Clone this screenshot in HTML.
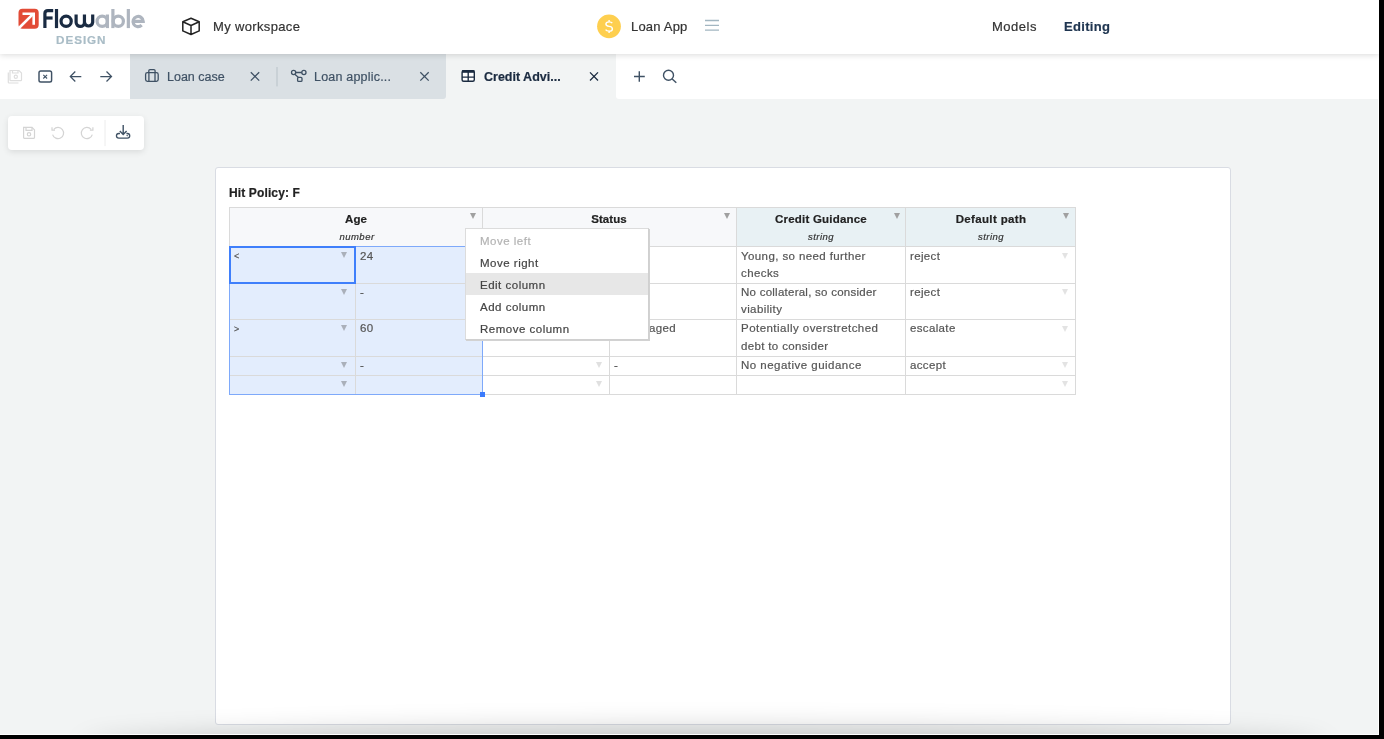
<!DOCTYPE html>
<html><head><meta charset="utf-8">
<style>
*{box-sizing:border-box;margin:0;padding:0}
html,body{width:1384px;height:739px;overflow:hidden;background:#000}
body{font-family:"Liberation Sans",sans-serif;position:relative;-webkit-font-smoothing:antialiased}
.abs{position:absolute}
.t{position:absolute;white-space:nowrap;line-height:1;will-change:transform;-webkit-text-stroke:0.2px currentColor}
#app{position:absolute;left:0;top:0;width:1379px;height:735px;background:#f2f4f4;overflow:hidden}
#edge-r{position:absolute;left:1378px;top:0;width:1px;height:735px;background:#fff}
#edge-b{position:absolute;left:0;top:734px;width:1379px;height:1px;background:#fff}
#hdr{position:absolute;left:0;top:0;width:1379px;height:54px;background:#fff;z-index:5;box-shadow:0 1px 6px rgba(0,0,0,.15)}
#tabbar{position:absolute;left:0;top:54px;width:1379px;height:45px;background:#f2f4f4}
#toolbar{position:absolute;left:8px;top:116px;width:136px;height:34px;background:#fff;border-radius:4px;box-shadow:0 2px 6px rgba(0,0,0,.10)}
#panel{position:absolute;left:215px;top:167px;width:1016px;height:558px;background:#fff;border:1px solid #d9dce3;border-radius:3px}
#bshadow{position:absolute;left:92px;top:740px;width:1225px;height:20px;border-radius:50%;box-shadow:0 0 28px 10px rgba(0,0,0,.22)}
</style></head>
<body>
<div id="app">
  <div id="tabbar">
    <div class="abs" style="left:0;top:0;width:130px;height:45px;background:#fff"></div>
    <svg class="abs" style="left:0;top:0" width="130" height="45" viewBox="0 54 130 45">
      <g fill="none" stroke="#dedede" stroke-width="1.2">
        <path d="M10 70.5 H19 L21.5 73 V80 Q21.5 80.7 20.8 80.7 H10.7 Q10 80.7 10 80 Z"/>
        <path d="M12.5 70.5 V73 H18 V70.5"/>
        <circle cx="15.8" cy="76.8" r="1.6"/>
        <path d="M8.3 72.5 V82.3 Q8.3 83 9 83 H18.5"/>
      </g>
      <rect x="39" y="71" width="12.6" height="11" rx="1.8" fill="none" stroke="#3f5164" stroke-width="1.45"/>
      <path d="M43.3 74.9 L47.1 78.5 M47.1 74.9 L43.3 78.5" stroke="#3f5164" stroke-width="1.05"/>
      <path d="M81.3 76.5 H70.3 M75.3 71.5 L70.3 76.5 L75.3 81.5" fill="none" stroke="#3f5164" stroke-width="1.25"/>
      <path d="M100.3 76.5 H111.5 M106.5 71.5 L111.5 76.5 L106.5 81.5" fill="none" stroke="#3f5164" stroke-width="1.25"/>
    </svg>
    <div class="abs" style="left:130px;top:0;width:316px;height:45px;background:#dae0e4;border-bottom-right-radius:3px"></div>
    <div class="abs" style="left:446px;top:0;width:170px;height:45px;background:#f2f4f4"></div>
    <div class="abs" style="left:616px;top:0;width:763px;height:45px;background:#fff;border-bottom-left-radius:3px"></div>
    <svg class="abs" style="left:130px;top:0" width="550" height="45" viewBox="130 54 550 45">
      <g fill="none" stroke="#3f5164" stroke-width="1.3">
        <rect x="145.6" y="72.6" width="12.6" height="8.8" rx="1.8"/>
        <path d="M148.8 72.6 V70.8 Q148.8 69.6 150 69.6 H153.9 Q155.1 69.6 155.1 70.8 V72.6"/>
        <path d="M148.9 72.6 V81.4 M155 72.6 V81.4"/>
        <path d="M250.8 72.2 L259.2 80.6 M259.2 72.2 L250.8 80.6"/>
        <circle cx="293.6" cy="72.5" r="2.1"/>
        <circle cx="303.9" cy="72.5" r="2.1"/>
        <rect x="297.6" y="77.4" width="4.4" height="4" rx="1"/>
        <path d="M295.7 72.5 H301.8 M294.8 74.3 L298.5 77.4"/>
        <path d="M420.3 72.2 L428.7 80.6 M428.7 72.2 L420.3 80.6"/>
      </g>
      <path d="M277 67 V86.4" stroke="#b8c2c8" stroke-width="1"/>
      <g fill="none" stroke="#1b2b40">
        <rect x="462.1" y="70.7" width="12.2" height="10.6" rx="1.5" stroke-width="1.4" fill="#fff"/>
        <path d="M462 71.5 H474.4" stroke-width="2.6"/>
        <path d="M462 77.1 H474.4 M468.2 72 V81.3" stroke-width="1.35"/>
        <path d="M590 72.4 L598 80.5 M598 72.4 L590 80.5" stroke-width="1.3"/>
      </g>
      <g fill="none" stroke="#3f5164" stroke-width="1.4">
        <path d="M639.3 71.2 V81.7 M634 76.5 H644.8"/>
        <circle cx="668.5" cy="75.2" r="5"/>
        <path d="M672.2 78.9 L676.3 82.8"/>
      </g>
    </svg>
    <div class="t" style="left:167px;top:17px;font-size:12.5px;color:#3f5164">Loan case</div>
    <div class="t" style="left:314px;top:17px;font-size:12.5px;letter-spacing:0.2px;color:#3f5164">Loan applic...</div>
    <div class="t" style="left:484px;top:17px;font-size:12.5px;font-weight:700;color:#1b2b40">Credit Advi...</div>
  </div>
  <div id="hdr">
    <svg class="abs" style="left:0;top:0" width="160" height="53" viewBox="0 0 160 53">
      <rect x="18.5" y="8.8" width="20.2" height="19.9" rx="4" fill="#e24b36"/>
      <path d="M17.5 29.5 L33.2 13.8" stroke="#fff" stroke-width="2.6" fill="none"/>
      <path d="M22.5 13.7 H33.7 V24.7" stroke="#fff" stroke-width="2.6" fill="none" stroke-linejoin="miter"/>
      <g fill="none" stroke="#1a2b42" stroke-width="3.2">
        <path d="M44.9 28.1 V13.6 Q44.9 10.6 47.9 10.6 H53.2"/>
        <path d="M44.9 18 H52.6"/>
        <path d="M56.5 9 V28.1"/>
        <circle cx="66.15" cy="21.3" r="5.1"/>
        <path d="M76.1 14.5 V22.3 A4.15 4.15 0 0 0 84.45 22.3 V14.5 M84.45 22.3 A4.15 4.15 0 0 0 92.7 22.3 V14.5"/>
      </g>
      <g fill="none" stroke="#aeb5bf" stroke-width="3.2">
        <circle cx="102.2" cy="21.3" r="5.1"/>
        <path d="M107.4 14.5 V28.1"/>
        <path d="M112.9 9 V28.1"/>
        <circle cx="118.3" cy="21.3" r="5.1"/>
        <path d="M128.35 9 V28.1"/>
        <path d="M132.6 21.3 H143.2 A5.1 5.1 0 1 0 141.7 25.2"/>
      </g>
    </svg>
    <div class="t" style="left:55.7px;top:33.5px;font-size:11.7px;font-weight:700;letter-spacing:0.95px;color:#a9bcc6">DESIGN</div>
    <svg class="abs" style="left:180px;top:16px" width="22" height="22" viewBox="0 0 22 22">
      <path d="M11 2.3 L19.2 5.8 V14.9 L11 18.5 L2.8 14.9 V5.8 Z M2.8 5.8 L11 9.5 L19.2 5.8 M11 9.5 V18.5" fill="none" stroke="#222" stroke-width="1.5" stroke-linejoin="round"/>
    </svg>
    <div class="t" style="left:213px;top:20px;font-size:13px;letter-spacing:0.35px;color:#333">My workspace</div>
    <svg class="abs" style="left:596px;top:13px" width="26" height="27" viewBox="596 13 26 27">
      <circle cx="609" cy="26.3" r="11.9" fill="#fecf4f"/>
      <path d="M612.3 23.2 Q611.4 21.9 609.1 21.9 Q605.9 21.9 605.9 24.1 Q605.9 26.1 609.1 26.4 Q612.4 26.7 612.4 28.9 Q612.4 31.1 609.1 31.1 Q606.6 31.1 605.6 29.6 M609.1 20.1 V21.9 M609.1 31.1 V32.9" fill="none" stroke="#fff" stroke-width="1.4"/>
    </svg>
    <div class="t" style="left:631px;top:20px;font-size:13px;letter-spacing:0.2px;color:#333">Loan App</div>
    <svg class="abs" style="left:704px;top:18px" width="16" height="14" viewBox="0 0 16 14">
      <path d="M1 2.5 H15 M1 7.4 H15 M1 12.1 H15" stroke="#a2b6c1" stroke-width="1.3"/>
    </svg>
    <div class="t" style="left:992px;top:20px;font-size:13px;letter-spacing:0.5px;color:#333">Models</div>
    <div class="t" style="left:1064px;top:20px;font-size:13px;letter-spacing:0.32px;font-weight:700;color:#1f3550">Editing</div>
  </div>
  <div id="toolbar">
    <svg class="abs" style="left:-8px;top:-116px" width="150" height="160" viewBox="0 0 150 160">
      <g fill="none" stroke="#d4d4d4" stroke-width="1.2">
        <path d="M23.6 127.4 H32 L34.5 129.9 V137.6 Q34.5 138.3 33.8 138.3 H24.3 Q23.6 138.3 23.6 137.6 Z"/>
        <path d="M26 127.4 V130.3 H32 V127.4"/>
        <circle cx="29" cy="134.3" r="1.7"/>
        <path d="M53.8 129.3 A5.6 5.6 0 1 1 52.6 134.6"/>
        <path d="M52 127.2 V130.2 H55"/>
        <path d="M91.1 129.3 A5.6 5.6 0 1 0 92.3 134.6"/>
        <path d="M92.9 127.2 V130.2 H89.9"/>
      </g>
      <path d="M105 120 V146.2" stroke="#ececec" stroke-width="1"/>
      <g fill="none" stroke="#3f5164" stroke-width="1.4">
        <path d="M123.2 125 V134.4 M119.8 131 L123.2 134.4 L126.6 131"/>
        <path d="M120 133.5 H118.8 A2.35 2.35 0 0 0 118.8 138.2 H127.4 A2.35 2.35 0 0 0 127.4 133.5 H126.4" stroke-width="1.3"/>
        <circle cx="127.2" cy="135.6" r="0.4" stroke-width="0.9"/>
      </g>
    </svg>
  </div>
  <div id="panel"></div>
  <div class="t" style="left:229px;top:186.6px;font-size:12px;font-weight:700;letter-spacing:0.13px;color:#222">Hit Policy: F</div>
<!--TABLE-->
<div class="abs" style="left:229px;top:207px;width:507px;height:40px;background:#f7f8fa;"></div>
<div class="abs" style="left:736px;top:207px;width:339px;height:40px;background:#e8f1f4;"></div>
<div class="abs" style="left:229px;top:246px;width:254px;height:149px;background:#e3edfd;"></div>
<div class="abs" style="left:229px;top:207px;width:1px;height:188px;background:#dadada;"></div>
<div class="abs" style="left:355px;top:207px;width:1px;height:188px;background:#dadada;"></div>
<div class="abs" style="left:482px;top:207px;width:1px;height:188px;background:#dadada;"></div>
<div class="abs" style="left:609px;top:207px;width:1px;height:188px;background:#dadada;"></div>
<div class="abs" style="left:736px;top:207px;width:1px;height:188px;background:#dadada;"></div>
<div class="abs" style="left:905px;top:207px;width:1px;height:188px;background:#dadada;"></div>
<div class="abs" style="left:1075px;top:207px;width:1px;height:188px;background:#dadada;"></div>
<div class="abs" style="left:229px;top:207px;width:847px;height:1px;background:#dadada;"></div>
<div class="abs" style="left:229px;top:246px;width:847px;height:1px;background:#dadada;"></div>
<div class="abs" style="left:229px;top:283px;width:847px;height:1px;background:#dadada;"></div>
<div class="abs" style="left:229px;top:319px;width:847px;height:1px;background:#dadada;"></div>
<div class="abs" style="left:229px;top:356px;width:847px;height:1px;background:#dadada;"></div>
<div class="abs" style="left:229px;top:375px;width:847px;height:1px;background:#dadada;"></div>
<div class="abs" style="left:229px;top:394px;width:847px;height:1px;background:#dadada;"></div>
<div class="abs" style="left:230px;top:208px;width:252px;height:38px;background:#f7f8fa;"></div>
<div class="abs" style="left:483px;top:208px;width:253px;height:38px;background:#f7f8fa;"></div>
<div class="abs" style="left:229px;top:246px;width:847px;height:1px;background:#dadada;"></div>
<div class="abs" style="left:229px;top:246px;width:254px;height:1px;background:#7ea9fa;"></div>
<div class="abs" style="left:229px;top:246px;width:1px;height:149px;background:#7ea9fa;"></div>
<div class="abs" style="left:482px;top:246px;width:1px;height:149px;background:#7ea9fa;"></div>
<div class="abs" style="left:229px;top:394px;width:254px;height:1px;background:#7ea9fa;"></div>
<div class="abs" style="left:229px;top:246px;width:127px;height:38px;border:2px solid #3f7ffb"></div>
<div class="abs" style="left:480px;top:392px;width:5px;height:5px;background:#3b7bfc;"></div>
<div class="t" style="left:256px;top:214px;width:200px;text-align:center;font-size:11.5px;letter-spacing:0.1px;color:#222;font-weight:700;font-style:normal">Age</div>
<div class="t" style="left:256.5px;top:232.3px;width:200px;text-align:center;font-size:9.5px;letter-spacing:0.5px;color:#333;font-weight:400;font-style:italic">number</div>
<div class="t" style="left:509px;top:214px;width:200px;text-align:center;font-size:11.5px;letter-spacing:0.1px;color:#222;font-weight:700;font-style:normal">Status</div>
<div class="t" style="left:721px;top:214px;width:200px;text-align:center;font-size:11.5px;letter-spacing:0.2px;color:#222;font-weight:700;font-style:normal">Credit Guidance</div>
<div class="t" style="left:721px;top:232.3px;width:200px;text-align:center;font-size:9.5px;letter-spacing:0.5px;color:#333;font-weight:400;font-style:italic">string</div>
<div class="t" style="left:890.5px;top:214px;width:200px;text-align:center;font-size:11.5px;letter-spacing:0.35px;color:#222;font-weight:700;font-style:normal">Default path</div>
<div class="t" style="left:890.5px;top:232.3px;width:200px;text-align:center;font-size:9.5px;letter-spacing:0.5px;color:#333;font-weight:400;font-style:italic">string</div>
<div class="abs" style="left:469.90000000000003px;top:213px;width:0;height:0;border-left:3.4px solid transparent;border-right:3.4px solid transparent;border-top:6px solid #a0a0a0"></div>
<div class="abs" style="left:724.1px;top:213px;width:0;height:0;border-left:3.4px solid transparent;border-right:3.4px solid transparent;border-top:6px solid #a0a0a0"></div>
<div class="abs" style="left:893.6px;top:213px;width:0;height:0;border-left:3.4px solid transparent;border-right:3.4px solid transparent;border-top:6px solid #a0a0a0"></div>
<div class="abs" style="left:1062.6px;top:213px;width:0;height:0;border-left:3.4px solid transparent;border-right:3.4px solid transparent;border-top:6px solid #a0a0a0"></div>
<div class="t" style="left:233.5px;top:252.3px;font-size:9px;letter-spacing:0px;color:#555;font-weight:400;font-style:normal;">&lt;</div>
<div class="t" style="left:233.5px;top:324.8px;font-size:9px;letter-spacing:0px;color:#555;font-weight:400;font-style:normal;">&gt;</div>
<div class="t" style="left:359.5px;top:250.8px;font-size:11.5px;letter-spacing:0.3px;color:#555;font-weight:400;font-style:normal;">24</div>
<div class="t" style="left:359.5px;top:287.0px;font-size:11.5px;letter-spacing:0.3px;color:#555;font-weight:400;font-style:normal;">-</div>
<div class="t" style="left:359.5px;top:323.3px;font-size:11.5px;letter-spacing:0.3px;color:#555;font-weight:400;font-style:normal;">60</div>
<div class="t" style="left:359.5px;top:359.8px;font-size:11.5px;letter-spacing:0.3px;color:#555;font-weight:400;font-style:normal;">-</div>
<div class="t" style="left:614px;top:359.8px;font-size:11.5px;letter-spacing:0.3px;color:#555;font-weight:400;font-style:normal;">-</div>
<div class="t" style="left:611px;top:323.3px;font-size:11.5px;letter-spacing:0.35px;color:#555;font-weight:400;font-style:normal;">Disengaged</div>
<div class="t" style="left:741px;top:250.8px;font-size:11.5px;letter-spacing:0.4px;color:#555;font-weight:400;font-style:normal;">Young, so need further</div>
<div class="t" style="left:741px;top:268.2px;font-size:11.5px;letter-spacing:0.4px;color:#555;font-weight:400;font-style:normal;">checks</div>
<div class="t" style="left:741px;top:287.0px;font-size:11.5px;letter-spacing:0.25px;color:#555;font-weight:400;font-style:normal;">No collateral, so consider</div>
<div class="t" style="left:741px;top:304.4px;font-size:11.5px;letter-spacing:0.4px;color:#555;font-weight:400;font-style:normal;">viability</div>
<div class="t" style="left:741px;top:323.3px;font-size:11.5px;letter-spacing:0.46px;color:#555;font-weight:400;font-style:normal;">Potentially overstretched</div>
<div class="t" style="left:741px;top:340.7px;font-size:11.5px;letter-spacing:0.35px;color:#555;font-weight:400;font-style:normal;">debt to consider</div>
<div class="t" style="left:741px;top:359.8px;font-size:11.5px;letter-spacing:0.48px;color:#555;font-weight:400;font-style:normal;">No negative guidance</div>
<div class="t" style="left:910px;top:250.8px;font-size:11.5px;letter-spacing:0.35px;color:#555;font-weight:400;font-style:normal;">reject</div>
<div class="t" style="left:910px;top:287.0px;font-size:11.5px;letter-spacing:0.35px;color:#555;font-weight:400;font-style:normal;">reject</div>
<div class="t" style="left:910px;top:323.3px;font-size:11.5px;letter-spacing:0.35px;color:#555;font-weight:400;font-style:normal;">escalate</div>
<div class="t" style="left:910px;top:359.8px;font-size:11.5px;letter-spacing:0.35px;color:#555;font-weight:400;font-style:normal;">accept</div>
<div class="abs" style="left:341.25px;top:252.2px;width:0;height:0;border-left:3.75px solid transparent;border-right:3.75px solid transparent;border-top:6.8px solid #aab0ba"></div>
<div class="abs" style="left:595.5px;top:252.5px;width:0;height:0;border-left:3.5px solid transparent;border-right:3.5px solid transparent;border-top:6px solid #e0e0e0"></div>
<div class="abs" style="left:1061.5px;top:252.5px;width:0;height:0;border-left:3.5px solid transparent;border-right:3.5px solid transparent;border-top:6px solid #e3e3e3"></div>
<div class="abs" style="left:341.25px;top:288.7px;width:0;height:0;border-left:3.75px solid transparent;border-right:3.75px solid transparent;border-top:6.8px solid #aab0ba"></div>
<div class="abs" style="left:595.5px;top:289px;width:0;height:0;border-left:3.5px solid transparent;border-right:3.5px solid transparent;border-top:6px solid #e0e0e0"></div>
<div class="abs" style="left:1061.5px;top:289px;width:0;height:0;border-left:3.5px solid transparent;border-right:3.5px solid transparent;border-top:6px solid #e3e3e3"></div>
<div class="abs" style="left:341.25px;top:325.2px;width:0;height:0;border-left:3.75px solid transparent;border-right:3.75px solid transparent;border-top:6.8px solid #aab0ba"></div>
<div class="abs" style="left:595.5px;top:325.5px;width:0;height:0;border-left:3.5px solid transparent;border-right:3.5px solid transparent;border-top:6px solid #e0e0e0"></div>
<div class="abs" style="left:1061.5px;top:325.5px;width:0;height:0;border-left:3.5px solid transparent;border-right:3.5px solid transparent;border-top:6px solid #e3e3e3"></div>
<div class="abs" style="left:341.25px;top:361.7px;width:0;height:0;border-left:3.75px solid transparent;border-right:3.75px solid transparent;border-top:6.8px solid #aab0ba"></div>
<div class="abs" style="left:595.5px;top:362px;width:0;height:0;border-left:3.5px solid transparent;border-right:3.5px solid transparent;border-top:6px solid #e0e0e0"></div>
<div class="abs" style="left:1061.5px;top:362px;width:0;height:0;border-left:3.5px solid transparent;border-right:3.5px solid transparent;border-top:6px solid #e3e3e3"></div>
<div class="abs" style="left:341.25px;top:380.7px;width:0;height:0;border-left:3.75px solid transparent;border-right:3.75px solid transparent;border-top:6.8px solid #aab0ba"></div>
<div class="abs" style="left:595.5px;top:381px;width:0;height:0;border-left:3.5px solid transparent;border-right:3.5px solid transparent;border-top:6px solid #e0e0e0"></div>
<div class="abs" style="left:1061.5px;top:381px;width:0;height:0;border-left:3.5px solid transparent;border-right:3.5px solid transparent;border-top:6px solid #e3e3e3"></div>
<div class="abs" style="left:465px;top:228px;width:184px;height:112px;background:#fff;border:1px solid #dcdcdc;border-right-color:#d0d0d0;border-bottom-color:#d0d0d0;box-shadow:1px 1px 0 #d2d2d2"></div>
<div class="abs" style="left:466px;top:273px;width:182px;height:22px;background:#e7e7e7;"></div>
<div class="t" style="left:480px;top:236.29999999999998px;font-size:11.5px;letter-spacing:0.5px;color:#b3b3b3;font-weight:400;font-style:normal;">Move left</div>
<div class="t" style="left:480px;top:258.2px;font-size:11.5px;letter-spacing:0.5px;color:#444;font-weight:400;font-style:normal;">Move right</div>
<div class="t" style="left:480px;top:280.2px;font-size:11.5px;letter-spacing:0.5px;color:#444;font-weight:400;font-style:normal;">Edit column</div>
<div class="t" style="left:480px;top:302.09999999999997px;font-size:11.5px;letter-spacing:0.5px;color:#444;font-weight:400;font-style:normal;">Add column</div>
<div class="t" style="left:480px;top:323.7px;font-size:11.5px;letter-spacing:0.5px;color:#444;font-weight:400;font-style:normal;">Remove column</div>
<!--/TABLE-->
  <div id="bshadow"></div>
</div>
<div id="edge-r"></div>
<div id="edge-b"></div>
</body></html>
